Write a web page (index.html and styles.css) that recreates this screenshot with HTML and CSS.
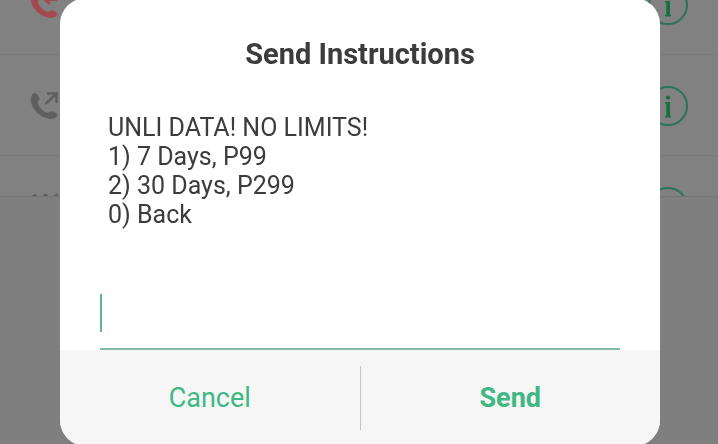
FILE: index.html
```
<!DOCTYPE html>
<html lang="en">
<head>
  <meta charset="UTF-8">
  <meta name="viewport" content="width=device-width, initial-scale=1">
  <title>Send Instructions</title>
  <link rel="stylesheet" href="styles.css">
</head>
<body>

<svg class="defs" aria-hidden="true">
  <symbol id="handset" viewBox="0 0 30 30">
    <path d="M2 4C3 2 5.500 1.600 7 3.200L9 6c.9 1.500.6 2.700-.6 4.200-.9 1.200-.6 2.600.4 4.300 1.600 2.700 3.800 5 6.600 6.500 1.700.9 3 .9 4.300 0 1.400-1 2.900-1 4.200-.2l2.600 1.700c1.400 1.200 1 3.200-.6 4.100-3.600 2.200-9.400 1.600-14.400-1.500C4.500 20.800.4 14 .8 7.800.9 6.300 1.300 5 2 4z" fill="currentColor"/>
  </symbol>
  <symbol id="info" viewBox="0 0 40 40">
    <circle cx="20" cy="20" r="19" fill="none" stroke="currentColor" stroke-width="2"/>
    <circle cx="20" cy="11.500" r="2.100" fill="#18703f"/>
    <path d="M17 16h5v14h1v1.500h-6V30h1.200V17.500H17z" fill="#18703f"/>
  </symbol>
</svg>

<ul class="calls">
  <li class="call missed">
    <svg class="call-icon" viewBox="0 0 30 30" aria-hidden="true">
      <use href="#handset"/>
      <path d="M27 9.500H15M20 5l-5 4.500 5 4.500" fill="none" stroke="currentColor" stroke-width="3"/>
    </svg>
    <button class="info" aria-label="Call details"><svg viewBox="0 0 40 40"><use href="#info"/></svg></button>
  </li>
  <li class="call">
    <svg class="call-icon" viewBox="0 0 30 30" aria-hidden="true">
      <use href="#handset"/>
      <path d="M15.500 13L26 3M17 2.500h9.500V12" fill="none" stroke="currentColor" stroke-width="2.500"/>
    </svg>
    <button class="info" aria-label="Call details"><svg viewBox="0 0 40 40"><use href="#info"/></svg></button>
  </li>
  <li class="call">
    <svg class="call-icon" viewBox="0 0 30 30" aria-hidden="true">
      <use href="#handset"/>
      <path d="M15 2l5 6 8-6M15 8V2" fill="none" stroke="currentColor" stroke-width="2.500"/>
    </svg>
    <button class="info" aria-label="Call details"><svg viewBox="0 0 40 40"><use href="#info"/></svg></button>
  </li>
</ul>

<div class="overlay">
  <form class="dialog" role="dialog" aria-labelledby="title">
    <h1 class="title" id="title">Send Instructions</h1>
    <label class="message" for="reply">UNLI DATA! NO LIMITS!<br>1) 7 Days, P99<br>2) 30 Days, P299<br>0) Back</label>
    <div class="field">
      <span class="caret"></span>
      <input class="reply" id="reply" type="text" autocomplete="off">
    </div>
    <div class="actions">
      <button class="action cancel" type="button">Cancel</button>
      <button class="action send" type="button">Send</button>
    </div>
  </form>
</div>

</body>
</html>
```
FILE: styles.css
```
* { box-sizing: border-box; }

body {
  margin: 0;
  min-height: 100vh;
  background: #7f7f7f;
  color: #3c3c3c;
  font-family: Roboto, "Liberation Sans", sans-serif;
  overflow: hidden;
}

button { border: 0; padding: 0; background: none; font: inherit; cursor: pointer; }

.defs { position: absolute; width: 0; height: 0; }

/* call log behind the dialog, scrolled part way through a row */
.calls {
  display: flex;
  flex-direction: column;
  height: 243px;
  margin: -46px 0 0;
  padding: 0;
  list-style: none;
  background: #818181;
  border-bottom: 1px solid #747474;
  overflow: hidden;
}
.call {
  display: flex;
  flex: none;
  align-items: center;
  justify-content: space-between;
  height: 101px;
  padding: 2px 30px 0;
  border-bottom: 1px solid #797979;
  color: #5f5f5f;
}
.missed { color: #a34a50; }
.call-icon { width: 30px; height: 30px; }
.info { width: 40px; height: 40px; color: #2b7458; }
.info svg { display: block; width: 100%; height: 100%; }

.overlay {
  position: fixed;
  inset: 0;
  display: flex;
  align-items: center;
  justify-content: center;
  padding: 0 58px 0 60px;
}
.dialog {
  display: flex;
  flex: 1;
  flex-direction: column;
  max-width: 600px;
  background: #fff;
  border-radius: 26px;
  overflow: hidden;
}
.title {
  margin: 0;
  padding: 40px 40px 0;
  font-size: 29px;
  line-height: 32px;
  font-weight: 700;
  text-align: center;
}
.message {
  padding: 43px 48px 0;
  font-size: 25px;
  line-height: 29px;
}
.field {
  display: flex;
  align-items: center;
  margin: 49px 40px 0;
  padding: 16px 0;
  border-bottom: 2px solid #7fbaa1;
}
.caret { width: 2px; height: 38px; background: #5eb596; }
.reply {
  flex: 1;
  height: 38px;
  border: 0;
  padding: 0 6px;
  outline: 0;
  background: none;
  color: inherit;
  font: inherit;
  font-size: 25px;
}
.actions {
  display: flex;
  padding: 16px 0;
  background: #f6f6f6;
}
.action {
  flex: 1;
  height: 64px;
  color: #3fb883;
  font-size: 27px;
}
.cancel { border-right: 1px solid #c4c4c4; }
.send { font-weight: 700; }
```
